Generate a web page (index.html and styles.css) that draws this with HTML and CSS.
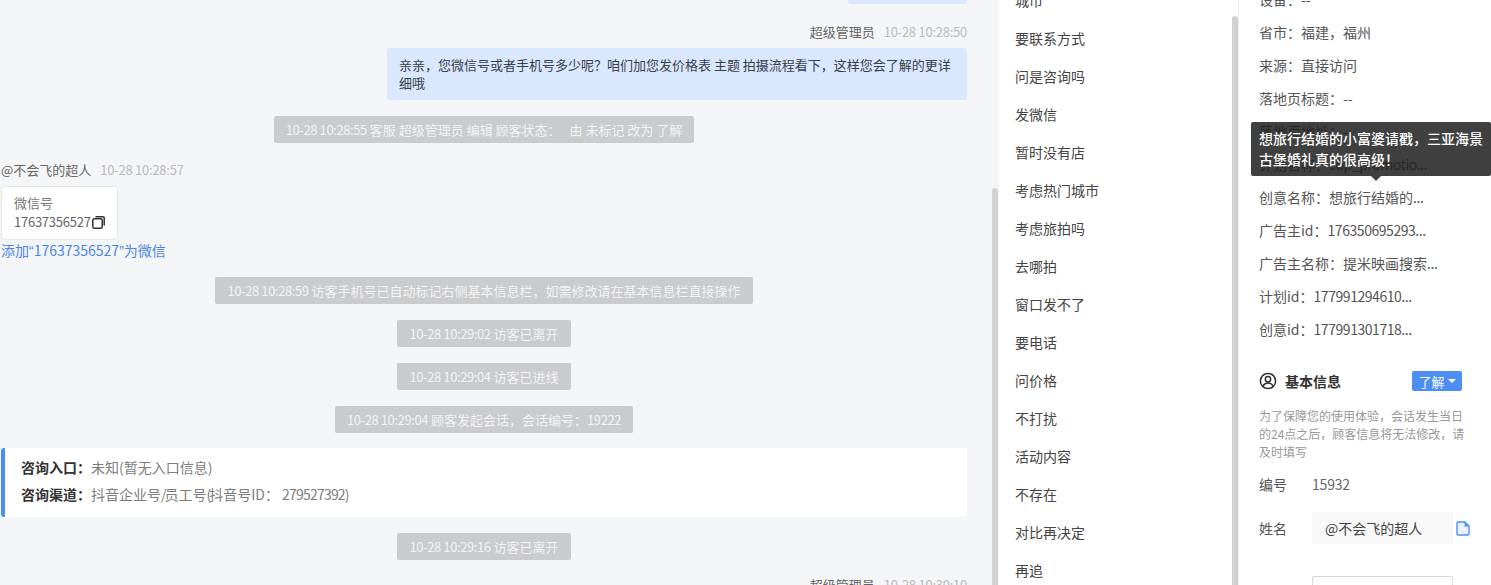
FILE: index.html
```html
<!DOCTYPE html>
<html lang="zh-CN">
<head>
<meta charset="utf-8">
<title>会话详情</title>
<link rel="stylesheet" href="styles.css">
</head>
<body>
<div class="app">
  <section class="chat">
    <div class="chat-flow">
      <div class="bubble-tail"></div>
      <div class="meta meta-right"><span class="meta-name">超级管理员</span><span class="meta-time num">10-28 10:28:50</span></div>
      <div class="bubble">亲亲，您微信号或者手机号多少呢？咱们加您发价格表 主题 拍摄流程看下，这样您会了解的更详细哦</div>
      <div class="pill pill-first"><span class="num">10-28 10:28:55</span> 客服 超级管理员 编辑 顾客状态<span class="wide-colon">：</span> 由 未标记 改为 了解</div>
      <div class="meta meta-left"><span class="meta-name">@不会飞的超人</span><span class="meta-time num">10-28 10:28:57</span></div>
      <div class="card">
        <div class="card-title">微信号</div>
        <div class="card-number"><span class="num">17637356527</span><svg class="copy-icon" viewBox="0 0 13 13" width="13" height="13"><rect x="0.800" y="2.800" width="9.400" height="9.400" rx="1.500" fill="none" stroke="#333" stroke-width="1.500"/><path d="M3.500 0.800h7.700a1 1 0 0 1 1 1v7.700" fill="none" stroke="#333" stroke-width="1.500"/></svg></div>
      </div>
      <a class="wechat-link">添加<span class="quote">“</span>17637356527<span class="quote">”</span>为微信</a>
      <div class="pill pill-phone"><span class="num">10-28 10:28:59</span> 访客手机号已自动标记右侧基本信息栏，如需修改请在基本信息栏直接操作</div>
      <div class="pill"><span class="num">10-28 10:29:02</span> 访客已离开</div>
      <div class="pill"><span class="num">10-28 10:29:04</span> 访客已进线</div>
      <div class="pill"><span class="num">10-28 10:29:04</span> 顾客发起会话，会话编号：<span class="num">19222</span></div>
      <div class="notice">
        <div class="notice-row"><b class="notice-label">咨询入口：</b><span>未知(暂无入口信息)</span></div>
        <div class="notice-row"><b class="notice-label">咨询渠道：</b><span>抖音企业号<span class="squeeze">/</span>员工号<span class="squeeze">(</span>抖音号ID： <span class="id-num">279527392)</span></span></div>
      </div>
      <div class="pill"><span class="num">10-28 10:29:16</span> 访客已离开</div>
      <div class="meta meta-right meta-last"><span class="meta-name">超级管理员</span><span class="meta-time num">10-28 10:30:10</span></div>
    </div>
    <div class="scrollbar chat-bar"><div class="thumb chat-thumb"></div></div>
  </section>

  <section class="tags">
    <ul class="tag-list">
      <li>城市</li><li>要联系方式</li><li>问是咨询吗</li><li>发微信</li><li>暂时没有店</li><li>考虑热门城市</li><li>考虑旅拍吗</li><li>去哪拍</li><li>窗口发不了</li><li>要电话</li><li>问价格</li><li>不打扰</li><li>活动内容</li><li>不存在</li><li>对比再决定</li><li>再追</li>
    </ul>
    <div class="scrollbar tags-bar"><div class="thumb tags-thumb"></div></div>
  </section>

  <section class="info">
    <ul class="info-list">
      <li>设备：--</li><li>省市：福建，福州</li><li>来源：直接访问</li><li>落地页标题：--</li><li>落地页地址：--</li><li>计划名称：<span class="tight">cdp_promotio...</span></li><li>创意名称：想旅行结婚的<span class="tight">...</span></li><li>广告主id：<span class="tight">176350695293...</span></li><li>广告主名称：提米映画搜索<span class="tight">...</span></li><li>计划id：<span class="tight">177991294610...</span></li><li>创意id：<span class="tight">177991301718...</span></li>
    </ul>
    <div class="section-head">
      <svg class="user-icon" viewBox="0 0 18 18" width="18" height="18"><circle cx="9" cy="9" r="7.600" fill="none" stroke="#333" stroke-width="1.500"/><circle cx="9" cy="7.200" r="2.700" fill="none" stroke="#333" stroke-width="1.500"/><path d="M3.900 14.200c1-2.200 2.900-3.200 5.100-3.200s4.100 1 5.100 3.200" fill="none" stroke="#333" stroke-width="1.500"/></svg>
      <h3 class="section-title">基本信息</h3>
      <button class="status-btn">了解<i class="caret"></i></button>
    </div>
    <p class="hint">为了保障您的使用体验，会话发生当日的24点之后，顾客信息将无法修改，请及时填写</p>
    <div class="field field-id"><span class="field-label">编号</span><span class="field-value">15932</span></div>
    <div class="field field-name"><span class="field-label">姓名</span><span class="field-input">@不会飞的超人</span>
      <svg class="file-icon" viewBox="0 0 14 15" width="14" height="15"><path d="M1 2a1 1 0 0 1 1-1h7l4 4v8a1 1 0 0 1-1 1H2a1 1 0 0 1-1-1z" fill="#eaf2ff" stroke="#4d8ef5" stroke-width="1.400"/><path d="M8.500 1v4.500H13z" fill="#4d8ef5"/></svg>
    </div>
    <div class="field field-next"><span class="field-box"></span></div>
    <div class="tooltip">想旅行结婚的小富婆请戳，三亚海景古堡婚礼真的很高级！</div>
  </section>
</div>
</body>
</html>
```
FILE: styles.css
```css
* { box-sizing: border-box; }
html, body { margin: 0; padding: 0; height: 585px; overflow: hidden; }
body {
  font-family: "Noto Sans CJK SC", "Open Sans", sans-serif;
  font-size: 13px;
  color: #333;
  background: #fff;
}
.app { display: flex; height: 585px; overflow: hidden; }
.num { letter-spacing: -0.25px; }
.pill .num { letter-spacing: -0.4px; }
.tight { letter-spacing: -0.45px; }
.quote { font-family: "Liberation Sans", sans-serif; }
.wide-colon { margin: 0 6px 0 0; }
.squeeze { letter-spacing: -2px; }
.id-num { letter-spacing: -0.8px; }

/* chat column */
.chat { display: flex; width: 999px; flex: none; background: #f4f5f7; overflow: hidden; }
.chat-flow { width: 992px; padding: 0 25px 0 1px; display: flex; flex-direction: column; flex: none; }
.bubble-tail { align-self: flex-end; width: 119px; height: 4px; background: #d9e7ff; border-radius: 0 0 3px 3px; flex: none; }
.meta { display: flex; height: 16px; line-height: 16px; flex: none; white-space: nowrap; }
.meta-right { justify-content: flex-end; margin-top: 20px; }
.meta-left { margin-top: 19px; }
.meta-last { margin-top: 17px; }
.meta-name { color: #666; }
.meta-time { color: #bbb; margin-left: 9px; }
.bubble {
  align-self: flex-end;
  width: 580px;
  margin-top: 8px;
  padding: 8px 13px 8px 12px;
  line-height: 18px;
  background: #d9e7ff;
  border-radius: 3px;
  color: #3a3f48;
  flex: none;
}
.pill {
  align-self: center;
  height: 27px;
  line-height: 27px;
  padding: 0 12px;
  margin-top: 16px;
  background: #cacbcd;
  color: #f3f3f3;
  border-radius: 2px;
  white-space: nowrap;
  flex: none;
}
.pill-phone { margin-top: 17px; }
.card {
  width: 117px;
  height: 54px;
  margin-top: 8px;
  padding: 7px 0 0 12px;
  background: #fff;
  border: 1px solid #e6e6e6;
  border-radius: 4px;
  line-height: 18px;
  flex: none;
}
.card-title { color: #777; }
.card-number { display: flex; align-items: center; color: #666; margin-top: 1px; white-space: nowrap; }
.copy-icon { flex: none; margin-left: 1px; }
.wechat-link { display: block; height: 18px; margin-top: 1px; margin-bottom: 1px; font-size: 14px; line-height: 18px; color: #4a86e8; white-space: nowrap; flex: none; }
.notice {
  margin-top: 15px;
  height: 69px;
  padding: 6px 0 0 16px;
  background: #fff;
  border-left: 4px solid #4d8ef5;
  border-radius: 3px 0 0 3px;
  font-size: 14px;
  flex: none;
}
.notice-row { height: 27px; line-height: 27px; color: #7d7d7d; white-space: nowrap; }
.notice-label { color: #333; font-weight: 700; }
.notice + .pill { margin-top: 16px; }

/* scrollbars */
.scrollbar { flex: none; height: 100%; }
.thumb { background: #d2d2d2; border-radius: 3px 3px 0 0; height: 100%; }
.chat-bar { width: 6px; padding-top: 188px; }
.tags-bar { width: 6px; padding-top: 16px; }

/* tag list column */
.tags { display: flex; width: 240px; flex: none; background: #fff; overflow: hidden; border-right: 1px solid #f1f1f1; }
.tag-list { list-style: none; margin: -19px 0 0; padding: 0 0 0 16px; width: 233px; flex: none; }
.tag-list li { height: 38px; line-height: 38px; font-size: 14px; color: #444; }

/* info column */
.info { position: relative; flex: 1; min-width: 0; padding: 0 0 0 20px; overflow: hidden; background: #fff; }
.info-list { list-style: none; margin: -17px 0 0; padding: 0; }
.info-list li { height: 33px; line-height: 33px; font-size: 14px; color: #555; white-space: nowrap; }
.section-head { display: flex; align-items: center; height: 20px; margin-top: 25px; width: 203px; }
.user-icon { flex: none; }
.section-title { margin: 0 0 0 8px; font-size: 14px; font-weight: 700; color: #333; line-height: 20px; }
.status-btn {
  margin-left: auto;
  display: flex;
  align-items: center;
  justify-content: center;
  width: 50px;
  height: 20px;
  padding: 0;
  border: 0;
  border-radius: 2px;
  background: #4d8ef5;
  color: #fff;
  font: inherit;
  font-size: 13px;
}
.caret { width: 0; height: 0; margin-left: 3px; border-left: 4px solid transparent; border-right: 4px solid transparent; border-top: 4px solid #fff; }
.hint { width: 206px; margin: 16px 0 0; font-size: 12px; line-height: 18px; color: #999; }
.field { display: flex; align-items: center; font-size: 14px; color: #555; }
.field-label { width: 53px; flex: none; }
.field-value { color: #666; letter-spacing: -0.2px; }
.field-id { height: 20px; margin-top: 13px; }
.field-name { height: 32px; margin-top: 18px; }
.field-input { width: 141px; height: 32px; line-height: 32px; padding-left: 13px; background: #f8f8f8; color: #444; flex: none; white-space: nowrap; }
.file-icon { flex: none; margin-left: 3px; }
.field-next { margin-top: 32px; padding-left: 53px; }
.field-box { display: block; width: 141px; height: 32px; border: 1px solid #d9d9d9; border-radius: 2px; flex: none; }
.tooltip {
  position: absolute;
  left: 12px;
  top: 122px;
  width: 240px;
  height: 54px;
  padding: 6px 8px;
  font-size: 14px;
  font-weight: 500;
  line-height: 21px;
  color: #fff;
  background: rgba(30, 30, 30, 0.85);
  border-radius: 2px;
}
.tooltip::after {
  content: "";
  position: absolute;
  left: 120px;
  bottom: -5px;
  border-left: 5px solid transparent;
  border-right: 5px solid transparent;
  border-top: 5px solid rgba(30, 30, 30, 0.85);
}
```
